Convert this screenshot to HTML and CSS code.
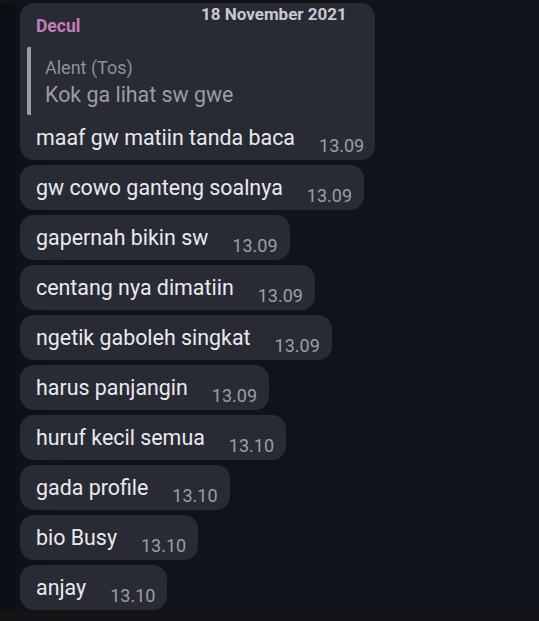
FILE: index.html
```html
<!DOCTYPE html>
<html lang="id">
<head>
<meta charset="utf-8">
<title>Chat</title>
<link rel="stylesheet" href="styles.css">
</head>
<body>
<div class="screen">
  <div class="topbar"></div>
  <div class="chat">
    <div class="date">18 November 2021</div>
    <div class="bubble first">
      <div class="sender">Decul</div>
      <div class="quote">
        <div class="quote-name">Alent (Tos)</div>
        <div class="quote-text">Kok ga lihat sw gwe</div>
      </div>
      <div class="row"><span class="text">maaf gw matiin tanda baca</span><span class="time">13.09</span></div>
    </div>
    <div class="bubble"><div class="row"><span class="text">gw cowo ganteng soalnya</span><span class="time">13.09</span></div></div>
    <div class="bubble"><div class="row"><span class="text">gapernah bikin sw</span><span class="time">13.09</span></div></div>
    <div class="bubble"><div class="row"><span class="text">centang nya dimatiin</span><span class="time">13.09</span></div></div>
    <div class="bubble"><div class="row"><span class="text">ngetik gaboleh singkat</span><span class="time">13.09</span></div></div>
    <div class="bubble"><div class="row"><span class="text">harus panjangin</span><span class="time">13.09</span></div></div>
    <div class="bubble"><div class="row"><span class="text">huruf kecil semua</span><span class="time">13.10</span></div></div>
    <div class="bubble"><div class="row"><span class="text">gada profile</span><span class="time">13.10</span></div></div>
    <div class="bubble"><div class="row"><span class="text">bio Busy</span><span class="time">13.10</span></div></div>
    <div class="bubble"><div class="row"><span class="text">anjay</span><span class="time">13.10</span></div></div>
  </div>
  <div class="bottombar"></div>
</div>
</body>
</html>
```
FILE: styles.css
```css
html, body {
  margin: 0;
  padding: 0;
  background: #0e121b;
}
.screen {
  width: 539px;
  height: 621px;
  display: flex;
  flex-direction: column;
  overflow: hidden;
  font-family: Roboto, "Liberation Sans", sans-serif;
  background: linear-gradient(90deg, #0a0d12 0px, #0d1119 18px, #0e131c 60px, #0e131d 100%);
}
.topbar {
  height: 3px;
  background: #141414;
  flex: none;
}
.bottombar {
  height: 11px;
  background: #131313;
  flex: none;
}
.chat {
  position: relative;
  flex: 1;
  display: flex;
  flex-direction: column;
  align-items: flex-start;
  gap: 5px;
  padding-left: 20px;
  overflow: hidden;
}
.date {
  position: absolute;
  left: 201px;
  top: 1px;
  font-size: 17px;
  font-weight: 700;
  color: #c6c9d1;
  line-height: 20px;
  z-index: 2;
}
.bubble {
  background: #282b34;
  border-radius: 14px;
  padding: 10px 12px 4px 16px;
  flex: none;
}
.bubble.first {
  padding-top: 13px;
  width: 355px;
  box-sizing: border-box;
}
.sender {
  font-size: 17.5px;
  font-weight: 700;
  color: #c47cbd;
  line-height: 20px;
}
.quote {
  margin: 11px 0 0 -9px;
  border-left: 4px solid #9b9ea6;
  border-radius: 2px;
  padding: 9px 0 6px 14px;
}
.quote-name {
  font-size: 18px;
  color: #8e919a;
  line-height: 24px;
}
.quote-text {
  margin-top: 1px;
  font-size: 21.4px;
  color: #9a9da6;
  line-height: 28px;
}
.first .row {
  margin-top: 10px;
  justify-content: space-between;
}
.row {
  display: flex;
  align-items: flex-end;
  gap: 24px;
}
.text {
  font-size: 21.4px;
  line-height: 26px;
  color: #e9eaee;
  margin-bottom: 5px;
  white-space: nowrap;
}
.time {
  font-size: 18px;
  line-height: 20px;
  color: #9b9ea6;
  white-space: nowrap;
}
```
